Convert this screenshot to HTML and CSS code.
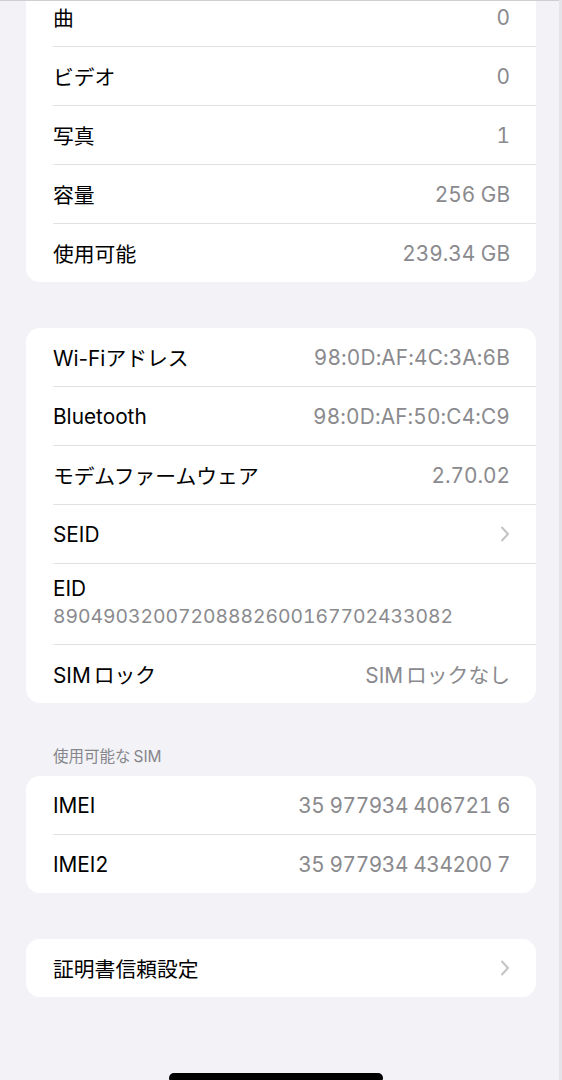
FILE: index.html
```html
<!DOCTYPE html>
<html lang="ja">
<head>
<meta charset="utf-8">
<link rel="stylesheet" href="styles.css">
</head>
<body>
<div class="page">
  <div class="card card-first">
    <div class="row"><span class="label">曲</span><span class="value">0</span></div>
    <div class="row"><span class="label">ビデオ</span><span class="value">0</span></div>
    <div class="row"><span class="label">写真</span><span class="value">1</span></div>
    <div class="row"><span class="label">容量</span><span class="value">256 GB</span></div>
    <div class="row"><span class="label">使用可能</span><span class="value">239.34 GB</span></div>
  </div>

  <div class="card">
    <div class="row"><span class="label">Wi-Fiアドレス</span><span class="value mac">98:0D:AF:4C:3A:6B</span></div>
    <div class="row"><span class="label">Bluetooth</span><span class="value mac">98:0D:AF:50:C4:C9</span></div>
    <div class="row"><span class="label">モデムファームウェア</span><span class="value">2.70.02</span></div>
    <div class="row"><span class="label">SEID</span><svg class="chevron" viewBox="0 0 10 16" width="10" height="16"><path d="M2 1.5 L8 8 L2 14.5" fill="none" stroke="#c4c4c7" stroke-width="2" stroke-linecap="round" stroke-linejoin="round"/></svg></div>
    <div class="row row-stack"><span class="label">EID</span><span class="value value-block">89049032007208882600167702433082</span></div>
    <div class="row"><span class="label"><span class="latin">SIM</span>ロック</span><span class="value"><span class="latin">SIM</span>ロックなし</span></div>
  </div>

  <div class="section-header">使用可能な<span class="latin-s">SIM</span></div>
  <div class="card card-tight">
    <div class="row"><span class="label">IMEI</span><span class="value imei">35 977934 406721 6</span></div>
    <div class="row"><span class="label">IMEI2</span><span class="value imei">35 977934 434200 7</span></div>
  </div>

  <div class="card">
    <div class="row"><span class="label">証明書信頼設定</span><svg class="chevron" viewBox="0 0 10 16" width="10" height="16"><path d="M2 1.5 L8 8 L2 14.5" fill="none" stroke="#c4c4c7" stroke-width="2" stroke-linecap="round" stroke-linejoin="round"/></svg></div>
  </div>
</div>
<div class="home-indicator"></div>
<div class="top-line"></div>
<div class="right-line"></div>
</body>
</html>
```
FILE: styles.css
```css
html, body {
  margin: 0;
  padding: 0;
}
body {
  background: #f2f2f7;
  font-family: Inter, "Noto Sans CJK JP", sans-serif;
  color: #000;
  height: 1080px;
  overflow: hidden;
  position: relative;
}
.page {
  padding: 0 26px;
  display: flex;
  flex-direction: column;
}
.card {
  background: #fff;
  border-radius: 14px;
  margin-top: 46px;
  overflow: hidden;
}
.card-first {
  margin-top: -12px;
}
.card-tight {
  margin-top: 0;
}
.row {
  display: flex;
  align-items: center;
  justify-content: space-between;
  height: 58px;
  margin-left: 27px;
  padding-right: 26px;
}
.row + .row {
  border-top: 1px solid #e1e1e4;
}
.label {
  font-size: 20.8px;
  white-space: nowrap;
}
.value {
  font-size: 20.8px;
  color: #8a8a8e;
  font-variant-numeric: tabular-nums;
  white-space: nowrap;
}
.mac {
  letter-spacing: 0.15px;
}
.imei {
  letter-spacing: -0.4px;
}
.latin {
  margin-right: 3px;
}
.latin-s {
  margin-left: 3px;
}
.row-stack {
  height: 81px;
  box-sizing: border-box;
  flex-direction: column;
  align-items: flex-start;
  justify-content: flex-start;
  padding-top: 12px;
}
.row-stack .label {
  line-height: 26px;
}
.value-block {
  line-height: 28px;
  font-size: 19.3px;
}
.chevron {
  display: block;
}
.section-header {
  font-size: 15.5px;
  color: #86868b;
  line-height: 20px;
  padding: 44px 0 9px 27px;
}
.home-indicator {
  position: absolute;
  left: 169px;
  top: 1073px;
  width: 214px;
  height: 10px;
  border-radius: 5px;
  background: #000;
}
.top-line {
  position: absolute;
  left: 0;
  top: 0;
  width: 100%;
  height: 1px;
  background: #cfcfd3;
}
.right-line {
  position: absolute;
  right: 0;
  top: 0;
  width: 3px;
  height: 100%;
  background: #e4e4e9;
}
```
